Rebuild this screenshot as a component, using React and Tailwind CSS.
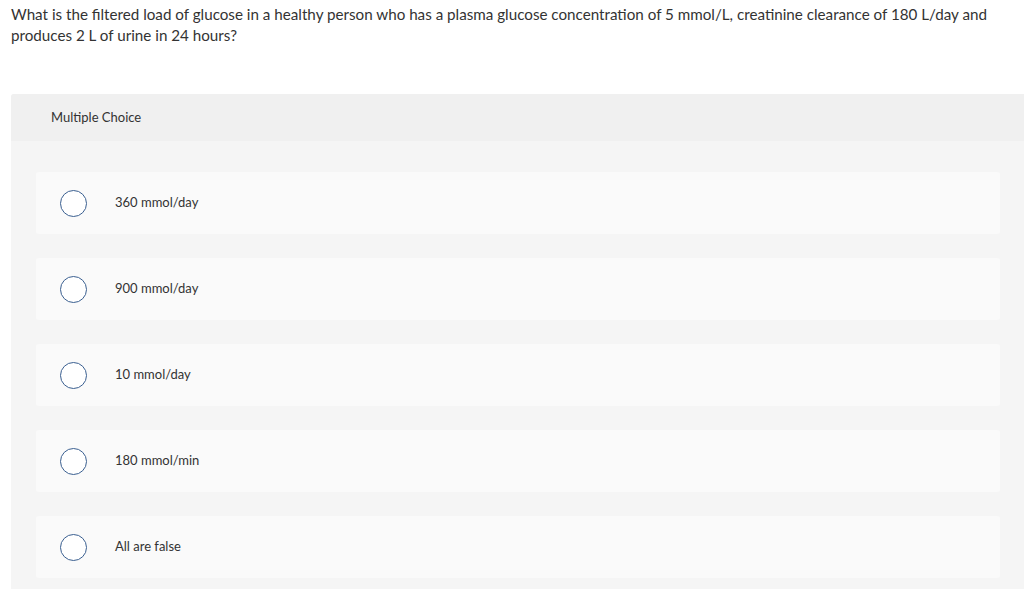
const options = ['360 mmol/day', '900 mmol/day', '10 mmol/day', '180 mmol/min', 'All are false']

export default function App() {
  return (
    <div className="w-[1024px] h-[589px] overflow-hidden bg-white font-['Lato','Liberation_Sans',sans-serif] text-[#333]">
      {/* Question */}
      <p className="pl-[11px] pr-6 pt-[4px] text-[15.2px] leading-[21px]">
        What is the filtered load of glucose in a healthy person who has a plasma glucose concentration of 5 mmol/L, creatinine clearance of 180 L/day and produces 2 L of urine in 24 hours?
      </p>

      {/* Answer panel */}
      <div className="ml-[11px] mt-[48px] rounded-tl-[3px] bg-[#f5f5f5] pb-[11px]">
        <div className="flex h-[47px] items-center rounded-tl-[3px] bg-[#f0f0f0] pl-[40px] text-[13px]">
          Multiple Choice
        </div>
        <div className="flex flex-col gap-[24px] pl-[25px] pr-[24px] pt-[31px]">
          {options.map(opt => (
            <label key={opt} className="flex h-[62px] items-center rounded-[3px] bg-[#fafafa]">
              <span className="ml-[24px] h-[27px] w-[27px] shrink-0 rounded-full border border-[#3a5f90] bg-white" />
              <span className="ml-[28px] text-[13px]">{opt}</span>
            </label>
          ))}
        </div>
      </div>
    </div>
  )
}
